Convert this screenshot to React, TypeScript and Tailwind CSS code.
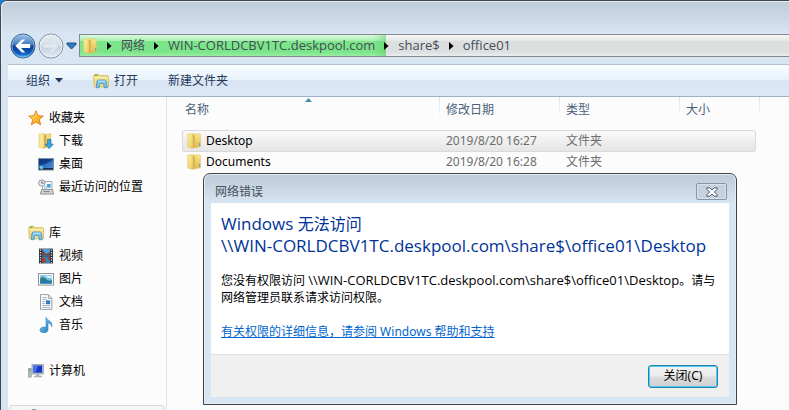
import type { ReactNode } from "react";

function FolderIcon() {
  return (
    <svg width="14" height="16" viewBox="0 0 14 16" aria-hidden="true" className="shrink-0">
      <defs>
        <linearGradient id="folderFront" x1="0" y1="0" x2="1" y2="1">
          <stop offset="0" stopColor="#fcf2a4" />
          <stop offset="1" stopColor="#ebc85f" />
        </linearGradient>
        <linearGradient id="folderBack" x1="0" y1="0" x2="0" y2="1">
          <stop offset="0" stopColor="#f8e78c" />
          <stop offset="1" stopColor="#e2bb48" />
        </linearGradient>
        <linearGradient id="folderSpine" x1="0" y1="0" x2="1" y2="0">
          <stop offset="0" stopColor="#c39a3c" />
          <stop offset="1" stopColor="#e8c75c" />
        </linearGradient>
      </defs>
      <path d="M5 1 12.8 .9 13.4 1.5V13.8L8 14.8 5 14z" fill="url(#folderBack)" stroke="#dfc265" strokeWidth=".6" />
      <path d="M12.2 10h1v3h-1z" fill="#4aa3d8" />
      <path d="M5.8 1.4 8.2 2.6v11.8l-2.4 1z" fill="url(#folderSpine)" />
      <path d="M.6 1.2 5.4.6 6 1.6V15.4L.6 14z" fill="url(#folderFront)" stroke="#e3c566" strokeWidth=".6" />
    </svg>
  );
}

function StarIcon() {
  return (
    <svg width="16" height="16" viewBox="0 0 16 16" aria-hidden="true" className="shrink-0">
      <defs>
        <linearGradient id="star" x1="0" y1="0" x2="1" y2="1">
          <stop offset="0" stopColor="#fff0a0" />
          <stop offset=".5" stopColor="#fdc02f" />
          <stop offset="1" stopColor="#f08a1c" />
        </linearGradient>
      </defs>
      <path d="M8 .8 10 5.7l5.3.4-4 3.5 1.3 5.2L8 12l-4.6 2.8 1.3-5.2-4-3.5L6 5.7z" fill="url(#star)" stroke="#e2791f" strokeWidth=".9" strokeLinejoin="round" />
    </svg>
  );
}

function DownloadsIcon() {
  return (
    <svg width="16" height="16" viewBox="0 0 16 16" aria-hidden="true" className="shrink-0">
      <path d="M5 1.2 12.8.9V13L8 14.6z" fill="#f3da78" stroke="#d9ba58" strokeWidth=".6" />
      <path d="M5.8 1.4 8.2 2.6v11.8l-2.4 1z" fill="#cfa748" />
      <path d="M1 1.2 5.4.6 6 1.6V15.4L1 14z" fill="#fae794" stroke="#dfc265" strokeWidth=".6" />
      <path d="M9.6 6.4h3.2v4.8h2.4L11.2 15.6 7.4 11.2h2.2z" fill="#3ba5ea" stroke="#1a6eb5" strokeWidth=".8" strokeLinejoin="round" />
    </svg>
  );
}

function DesktopIcon() {
  return (
    <svg width="16" height="16" viewBox="0 0 16 16" aria-hidden="true" className="shrink-0">
      <defs>
        <linearGradient id="desk" x1="0" y1="0" x2="1" y2="1">
          <stop offset="0" stopColor="#0d3a86" />
          <stop offset=".5" stopColor="#2e6fc6" />
          <stop offset="1" stopColor="#5a97dc" />
        </linearGradient>
      </defs>
      <rect x=".5" y="2.5" width="15" height="11.5" fill="url(#desk)" stroke="#7f93a8" />
      <path d="M1 9Q7 9 15 4V3H1z" fill="#0c3273" opacity=".7" />
      <rect x="1" y="12" width="14" height="1.6" fill="#1b2c4c" />
      <circle cx="3.4" cy="11.6" r="2" fill="#3fb4ea" />
      <path d="M2.4 10.6h1.2v1.2H2.4z" fill="#f6e07a" />
      <path d="M3.6 11.8h1.2V13H3.6z" fill="#7fd36a" />
    </svg>
  );
}

function RecentIcon() {
  return (
    <svg width="16" height="16" viewBox="0 0 16 16" aria-hidden="true" className="shrink-0">
      <path d="M4.5 2.5h9.5v8.5H4.5z" fill="#f3f6f8" stroke="#a2abb3" />
      <path d="M6 8h3M6 10h3" stroke="#9fb6c8" />
      <path d="M9 5h3.6v3.6H9z" fill="#4ba2d6" />
      <path d="M3.6 10.5h11l1 4.6H2.4z" fill="#d0d3d6" stroke="#8f959a" />
      <path d="M5.4 12.6h6.6" stroke="#7d858c" />
      <circle cx="3.8" cy="4" r="3.2" fill="#edf0f2" stroke="#92999f" />
      <path d="M3.8 2v2.2h1.8" fill="none" stroke="#5b656e" />
    </svg>
  );
}

function LibraryIcon() {
  return (
    <svg width="16" height="16" viewBox="0 0 16 16" aria-hidden="true" className="shrink-0">
      <path d="M.7 2.8 1.6 1.4h4.2l1 1.3h8.3l.4.8v10.3H1.3z" fill="#f5df83" stroke="#d2b255" strokeWidth=".8" />
      <path d="M2 2.2h2.6" stroke="#5aa84e" strokeWidth="1.2" />
      <path d="M1.3 4.8h14" stroke="#fff5bd" />
      <path d="M3.3 14.7 4 8.2 5 7h7.3l1 1.2.9 6.5h-3l-.4-3.2-1-.9H7.4l-1 .9-.3 3.2z" fill="#79c5ea" stroke="#3c8cbd" strokeWidth=".8" strokeLinejoin="round" />
      <path d="M5 8.2h7.4" stroke="#c9ecfa" />
    </svg>
  );
}

function VideoIcon() {
  return (
    <svg width="16" height="16" viewBox="0 0 16 16" aria-hidden="true" className="shrink-0">
      <rect x="1" y=".6" width="14" height="14.8" fill="#2a3036" />
      <rect x="4" y="1" width="8" height="6.6" fill="#4d9fdc" />
      <rect x="4" y="8.4" width="8" height="6.6" fill="#3384c4" />
      <path d="m4 1 4 5 4-2v3.6H4z" fill="#6d4a4c" />
      <path d="m4 9 3 1 1 3-2 2H4zM12 8.4 9 10l3 3z" fill="#a3432f" />
      <path d="M2.5 1.4v13.4M13.5 1.4v13.4" stroke="#dfe7ec" strokeWidth="1.3" strokeDasharray="1.4 1.1" />
    </svg>
  );
}

function PictureIcon() {
  return (
    <svg width="16" height="16" viewBox="0 0 16 16" aria-hidden="true" className="shrink-0">
      <rect x=".5" y="2.5" width="15" height="11.6" fill="#fff" stroke="#8d9499" />
      <path d="M2.2 4.2h11.6v8.2H2.2z" fill="#71bce8" />
      <path d="M2.2 7.5Q5 5 8 8t5.8.8v3.6H2.2z" fill="#277e76" />
      <path d="M2.2 10.4q6-1.8 11.6.4v1.6H2.2z" fill="#2775b5" />
      <path d="M7 5.5q3-1.5 6.8 0v1.6q-3 .5-6.8-1.6" fill="#e2f4fd" />
    </svg>
  );
}

function DocumentIcon() {
  return (
    <svg width="16" height="16" viewBox="0 0 16 16" aria-hidden="true" className="shrink-0">
      <path d="M2.5.6h8l3.4 3.6v11.2H2.5z" fill="#fbfcfd" stroke="#8c959d" strokeWidth=".9" />
      <path d="M10.4.8v3.6h3.4" fill="#dfe4e8" stroke="#8c959d" strokeWidth=".8" />
      <path d="M4.2 3.5h4.6M4.2 5.5h4.6M4.2 7.5h3M4.2 9.5h3M4.2 11.5h8M4.2 13.4h8" stroke="#8fa5b8" strokeWidth=".8" />
      <rect x="8" y="6.4" width="4.2" height="3.8" fill="#2e79bd" />
    </svg>
  );
}

function MusicIcon() {
  return (
    <svg width="16" height="16" viewBox="0 0 16 16" aria-hidden="true" className="shrink-0">
      <defs>
        <linearGradient id="note" x1="0" y1="0" x2="1" y2="1">
          <stop offset="0" stopColor="#8fd3f5" />
          <stop offset="1" stopColor="#1272b8" />
        </linearGradient>
      </defs>
      <path d="M8 .4c.8 3 6.8 3.4 5.8 9.4-.4-2.6-1.8-3.6-3.8-4v6.4c0 5-8 4.4-8 1 0-2.8 3.2-3.8 6-2.6z" fill="url(#note)" stroke="#2585c4" strokeWidth=".6" />
    </svg>
  );
}

function ComputerIcon() {
  return (
    <svg width="16" height="16" viewBox="0 0 16 16" aria-hidden="true" className="shrink-0">
      <path d="M.6 5.5h2.6v8.6H.6z" fill="#b9c1c7" stroke="#808990" strokeWidth=".7" />
      <path d="M1.2 7.2h1.4" stroke="#49ba4a" strokeWidth="1.4" />
      <rect x="4" y="1.4" width="11.4" height="9.6" fill="#c3cad1" stroke="#8f989f" strokeWidth=".7" />
      <rect x="5.2" y="2.5" width="9" height="7.2" fill="#1738c4" />
      <path d="M5.2 2.5h5L7.4 9.7H5.2z" fill="#4b6fe8" />
      <path d="M8.4 11h2.8v1.8H8.4zM6 12.8h8v1.4H6z" fill="#a9b1b8" />
    </svg>
  );
}

function NetworkIcon() {
  return (
    <svg width="16" height="16" viewBox="0 0 16 16" aria-hidden="true" className="shrink-0">
      <circle cx="6" cy="5.5" r="5" fill="#3a93cf" stroke="#417894" strokeWidth=".7" />
      <path d="M3 2.5Q6-.5 8 2.4L6 5z" fill="#5fbb66" />
      <rect x="5" y="7" width="10" height="7" fill="#1738c4" stroke="#b4bcc3" />
    </svg>
  );
}

function BackArrow() {
  return (
    <svg width="26" height="26" viewBox="0 0 26 26" aria-hidden="true">
      <defs>
        <linearGradient id="backOrb" x1="0" y1="0" x2="0" y2="1">
          <stop offset="0" stopColor="#a4c6e8" />
          <stop offset=".45" stopColor="#3f79bd" />
          <stop offset=".5" stopColor="#0b3e92" />
          <stop offset=".8" stopColor="#0b5ac0" />
          <stop offset="1" stopColor="#4cc4fa" />
        </linearGradient>
      </defs>
      <circle cx="13" cy="13" r="12" fill="url(#backOrb)" stroke="#3f5f88" />
      <circle cx="13" cy="13" r="11" fill="none" stroke="#a6cdf0" strokeOpacity=".6" />
      <path d="m5.4 13 6.5-6.4h3.4L11 11h9.2v4H11l4.3 4.4h-3.4z" fill="#fff" />
    </svg>
  );
}

function ForwardArrow() {
  return (
    <svg width="26" height="26" viewBox="0 0 26 26" aria-hidden="true">
      <defs>
        <linearGradient id="fwdOrb" x1="0" y1="0" x2="0" y2="1">
          <stop offset="0" stopColor="#e6edf3" />
          <stop offset=".48" stopColor="#d6dfe8" />
          <stop offset=".52" stopColor="#c3cfdc" />
          <stop offset="1" stopColor="#e2edf7" />
        </linearGradient>
      </defs>
      <circle cx="13" cy="13" r="12" fill="url(#fwdOrb)" stroke="#7f8d9d" />
      <circle cx="13" cy="13" r="11" fill="none" stroke="#eff5fa" strokeOpacity=".8" />
      <path d="m20.6 13-6.5-6.4h-3.4L15 11H5.8v4H15l-4.3 4.4h3.4z" fill="#e3e9f0" stroke="#cdd7e1" strokeWidth=".6" />
    </svg>
  );
}

function Crumb({ children }: { children: ReactNode }) {
  return (
    <li className="flex items-center">
      <svg width="5" height="8" viewBox="0 0 5 8" aria-hidden="true">
        <path d="M0 0 4.6 4 0 8z" fill="#000" />
      </svg>
      <a href="#" className="px-[9px] text-[#444d55]">{children}</a>
    </li>
  );
}

function Path({ children }: { children: ReactNode }) {
  return <span className="font-['Open_Sans',sans-serif] text-[13px]">{children}</span>;
}

type Entry = { label: string; icon: ReactNode };

const groups: { head: Entry; items: Entry[] }[] = [
  {
    head: { label: "收藏夹", icon: <StarIcon /> },
    items: [
      { label: "下载", icon: <DownloadsIcon /> },
      { label: "桌面", icon: <DesktopIcon /> },
      { label: "最近访问的位置", icon: <RecentIcon /> },
    ],
  },
  {
    head: { label: "库", icon: <LibraryIcon /> },
    items: [
      { label: "视频", icon: <VideoIcon /> },
      { label: "图片", icon: <PictureIcon /> },
      { label: "文档", icon: <DocumentIcon /> },
      { label: "音乐", icon: <MusicIcon /> },
    ],
  },
  { head: { label: "计算机", icon: <ComputerIcon /> }, items: [] },
];

function Sidebar() {
  return (
    <nav className="flex w-[159px] shrink-0 flex-col gap-[23px] border-r border-[#d6e5f5] pt-[9px]">
      {groups.map((g) => (
        <div key={g.head.label}>
          <a href="#" className="flex h-[23px] items-center gap-[5px] pl-5">
            {g.head.icon}
            {g.head.label}
          </a>
          {g.items.map((it) => (
            <a key={it.label} href="#" className="flex h-[23px] items-center gap-[5px] pl-[30px]">
              {it.icon}
              {it.label}
            </a>
          ))}
        </div>
      ))}
      <a href="#" aria-label="网络" className="mx-px flex h-[23px] shrink-0 items-center rounded-[3px] border border-[#d9d9d9] bg-linear-to-b from-[#f8f8f8] to-[#e5e5e5] pl-[18px]">
        <NetworkIcon />
      </a>
    </nav>
  );
}

const files = [
  { name: "Desktop", date: "2019/8/20 16:27", kind: "文件夹", selected: true },
  { name: "Documents", date: "2019/8/20 16:28", kind: "文件夹", selected: false },
];

const divider = "border-r border-[#dbe8f5] [border-image:linear-gradient(#d5e4f4,#fcfcfc)_1]";

function FileList() {
  return (
    <main className="min-w-0 flex-1 pl-[15px]">
      <table className="w-[578px] table-fixed border-separate border-spacing-0 text-left">
        <colgroup>
          <col className="w-[258px]" />
          <col className="w-[120px]" />
          <col className="w-[120px]" />
          <col className="w-[80px]" />
        </colgroup>
        <thead className="text-[#4c607a]">
          <tr>
            <th scope="col" aria-sort="ascending" className="p-0 pb-3 font-normal">
              <div className={`relative h-[21px] pt-1 pl-[3px] ${divider}`}>
                名称
                <svg width="7" height="4" viewBox="0 0 7 4" aria-hidden="true" className="absolute top-px left-[123px]">
                  <path d="M0 4 3.5 0 7 4z" fill="#4d87a8" />
                </svg>
              </div>
            </th>
            <th scope="col" className="p-0 pb-3 font-normal"><div className={`h-[21px] pt-1 pl-[6px] ${divider}`}>修改日期</div></th>
            <th scope="col" className="p-0 pb-3 font-normal"><div className={`h-[21px] pt-1 pl-[6px] ${divider}`}>类型</div></th>
            <th scope="col" className="p-0 pb-3 font-normal"><div className={`h-[21px] pt-1 pl-[6px] ${divider}`}>大小</div></th>
          </tr>
        </thead>
        <tbody className="text-[#6d6d6d]">
          {files.map((f) => {
            const cell = f.selected
              ? "flex h-[22px] items-center border-y border-[#d9d9d9] bg-linear-to-b from-[#f9f9f9] to-[#e6e6e6]"
              : "flex h-[20px] items-center";
            return (
              <tr key={f.name}>
                <td className="p-0">
                  <div className={`${cell} gap-[5px] text-black ${f.selected ? "rounded-l-[3px] border-l pl-1" : "pl-[5px]"}`}>
                    <FolderIcon />
                    {f.name}
                  </div>
                </td>
                <td className="p-0"><div className={`${cell} pl-[6px]`}>{f.date}</div></td>
                <td className="p-0"><div className={`${cell} pl-[6px]`}>{f.kind}</div></td>
                <td className="p-0"><div className={`${cell} mr-1 ${f.selected ? "rounded-r-[3px] border-r" : ""}`} /></td>
              </tr>
            );
          })}
        </tbody>
      </table>
    </main>
  );
}

function ErrorDialog() {
  return (
    <section
      role="dialog"
      aria-labelledby="dialog-title"
      className="absolute top-[173px] left-[203px] w-[534px] rounded-t-[7px] border border-[#3f4448] bg-linear-to-b from-[#bdcbd9] to-[#d8e5f2] to-[30px] px-[7px] pb-[7px] inset-ring inset-ring-[#e3edf6]"
    >
      <header className="flex h-[29px] items-center justify-between pt-[6px] pr-[2px] pl-1">
        <h2 id="dialog-title" className="text-[#45515c]">网络错误</h2>
        <button type="button" aria-label="关闭窗口" className="flex h-[17px] w-[31px] items-center justify-center rounded-[2px] border border-[#8595a6] bg-[#c5d2de] inset-ring inset-ring-[#d8e3ed]">
          <svg width="12" height="10" viewBox="0 0 12 10" aria-hidden="true">
            <path d="M.8.8h3L6 3 8.2.8h3v1.4L8.4 5l2.8 2.8v1.4h-3L6 7 3.8 9.2h-3V7.8L3.6 5 .8 2.2z" fill="#f5f7f9" stroke="#505b67" />
          </svg>
        </button>
      </header>
      <div className="bg-white px-[10px] pt-[10px] pb-[14px]">
        <h1 className="font-['Open_Sans','Noto_Sans_CJK_SC',sans-serif] text-[17px] leading-[21px] text-[#003399]">
          Windows <span className="text-[16px]">无法访问</span>
          <br />
          {"\\\\WIN-CORLDCBV1TC.deskpool.com\\share$\\office01\\Desktop"}
        </h1>
        <p className="mt-4 leading-[17px]">
          您没有权限访问 <Path>{"\\\\WIN-CORLDCBV1TC.deskpool.com\\share$\\office01\\Desktop"}</Path>。请与
          <br />
          网络管理员联系请求访问权限。
        </p>
        <a href="#" className="mt-[17px] block leading-[17px] text-[#0066cc] underline">
          有关权限的详细信息，请参阅 Windows 帮助和支持
        </a>
      </div>
      <footer className="flex h-[43px] items-center justify-end border-t border-[#dfdfdf] bg-[#f0f0f0] pr-[11px]">
        <button type="button" className="h-[23px] w-[70px] rounded-[3px] border border-[#2f7fa8] bg-[linear-gradient(#f3f3f3_0%,#ebebeb_48%,#dddddd_52%,#cfcfcf_100%)] inset-ring inset-ring-[#45cdf3]">
          关闭(C)
        </button>
      </footer>
    </section>
  );
}

export default function App() {
  return (
    <div className="relative h-screen overflow-hidden bg-[#1a82dc] font-['Noto_Sans','Noto_Sans_CJK_SC',sans-serif] text-[12px] leading-[18px] text-black">
      <div className="flex h-full flex-col rounded-tl-[7px] border-t border-l border-[#45474f] bg-[#d8e5f2]">
        <header className="rounded-tl-[6px] border-t border-l border-[#e6eef6] bg-linear-to-b from-[#bfccda] to-[#d8e5f2] to-[32px] pt-8 pb-[7px]">
          <div className="flex items-center">
            <div className="-my-2 flex items-center pl-[8px]">
              <button type="button" aria-label="后退"><BackArrow /></button>
              <button type="button" aria-label="前进" className="ml-[2px]"><ForwardArrow /></button>
              <button type="button" aria-label="最近的页面" className="ml-[2px]">
                <svg width="11" height="8" viewBox="0 0 11 8" aria-hidden="true">
                  <path d="M1 1h9v1.4L5.5 7 1 2.4z" fill="#2e7fc2" stroke="#173f70" strokeWidth=".9" />
                </svg>
              </button>
            </div>
            <nav aria-label="地址" className="relative ml-[2px] h-[23px] flex-1 border border-r-0 border-[#85898d] bg-[linear-gradient(#f7f7f7_0%,#e4e6e6_28%,#dcdfe0_31%,#dcdfe0_80%,#eceded_100%)]">
              <div className="absolute inset-y-0 left-0 w-[306px] bg-[linear-gradient(to_right,transparent_96%,#62ca7280),linear-gradient(#d9fade_0%,#a6f0b0_28%,#7be589_31%,#7be589_80%,#9aeda4_100%)]" />
              <ol className="relative flex h-full items-center pl-[3px]">
                <li className="mr-[10px]"><FolderIcon /></li>
                <Crumb>网络</Crumb>
                <Crumb><Path>WIN-CORLDCBV1TC.deskpool.com</Path></Crumb>
                <Crumb><Path>share$</Path></Crumb>
                <Crumb><Path>office01</Path></Crumb>
              </ol>
            </nav>
          </div>
        </header>
        <div className="flex min-h-0 flex-1 flex-col pl-[7px]">
          <div className="flex h-[33px] shrink-0 items-center gap-[30px] border-t border-b border-t-[#b4c1d0] border-b-[#a0b0c9] bg-[linear-gradient(#fafdff_0%,#e8f2fb_47%,#dae5f4_50%,#dde8f6_100%)] pl-[18px] text-[#1e395b]">
            <button type="button" className="flex items-center gap-[5px]">
              组织
              <svg width="8" height="5" viewBox="0 0 8 5" aria-hidden="true">
                <path d="M0 0h8L4 4.6z" fill="#1e395b" />
              </svg>
            </button>
            <button type="button" className="flex items-center gap-[5px]">
              <LibraryIcon />
              打开
            </button>
            <button type="button">新建文件夹</button>
          </div>
          <div className="flex min-h-0 flex-1 bg-[#fcfcfc]">
            <Sidebar />
            <FileList />
          </div>
        </div>
      </div>
      <ErrorDialog />
    </div>
  );
}
